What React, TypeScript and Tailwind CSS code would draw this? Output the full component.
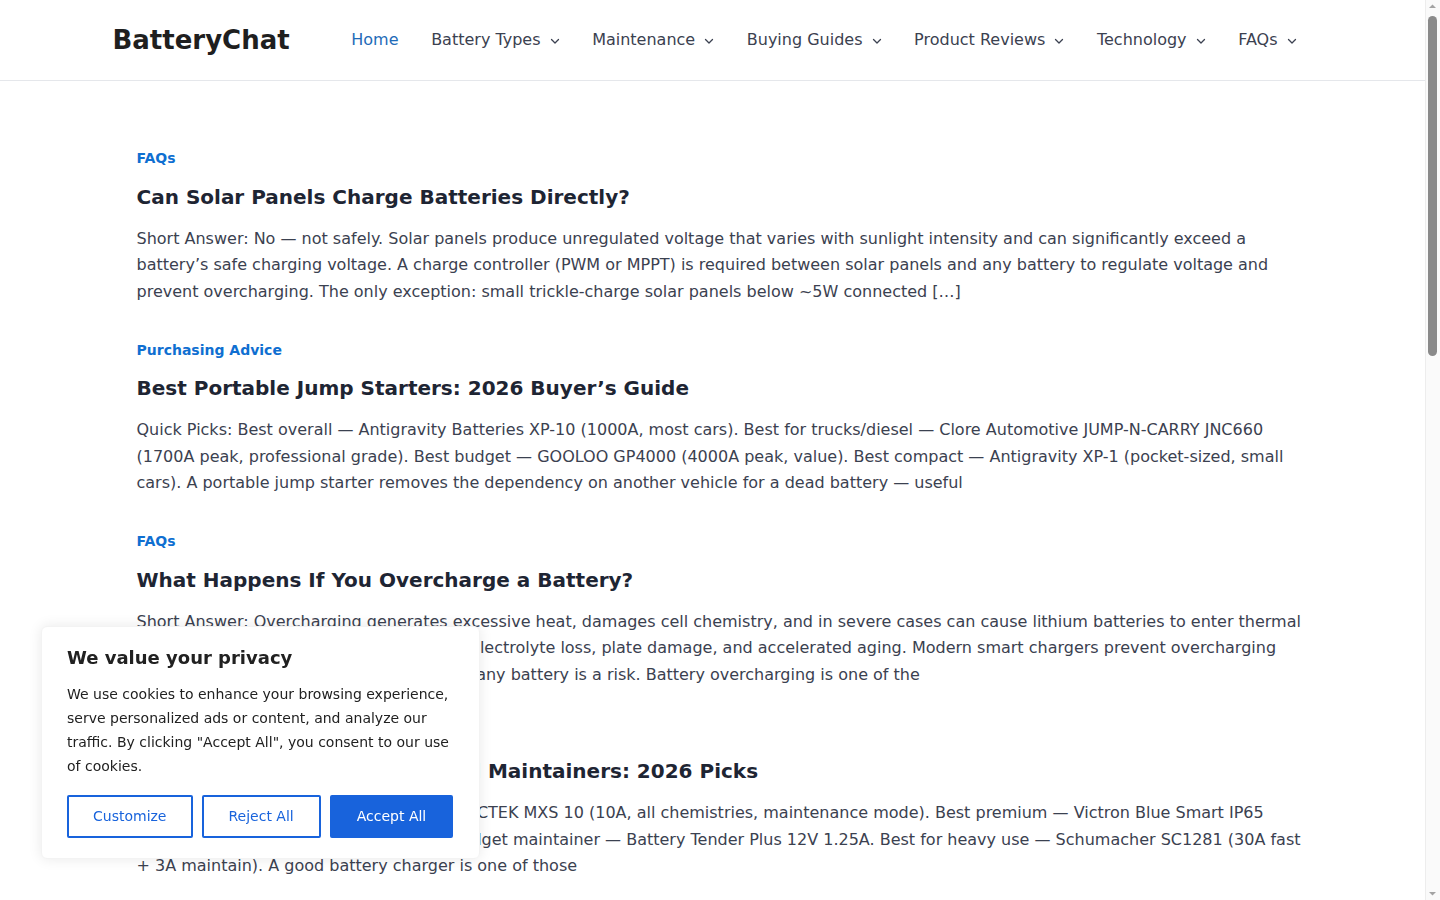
import React from "react";

type Post = { category: string; title: string; excerpt: string };

const posts: Post[] = [
  {
    category: "FAQs",
    title: "Can Solar Panels Charge Batteries Directly?",
    excerpt:
      "Short Answer: No — not safely. Solar panels produce unregulated voltage that varies with sunlight intensity and can significantly exceed a battery’s safe charging voltage. A charge controller (PWM or MPPT) is required between solar panels and any battery to regulate voltage and prevent overcharging. The only exception: small trickle-charge solar panels below ~5W connected […]",
  },
  {
    category: "Purchasing Advice",
    title: "Best Portable Jump Starters: 2026 Buyer’s Guide",
    excerpt:
      "Quick Picks: Best overall — Antigravity Batteries XP-10 (1000A, most cars). Best for trucks/diesel — Clore Automotive JUMP-N-CARRY JNC660 (1700A peak, professional grade). Best budget — GOOLOO GP4000 (4000A peak, value). Best compact — Antigravity XP-1 (pocket-sized, small cars). A portable jump starter removes the dependency on another vehicle for a dead battery — useful",
  },
  {
    category: "FAQs",
    title: "What Happens If You Overcharge a Battery?",
    excerpt:
      "Short Answer: Overcharging generates excessive heat, damages cell chemistry, and in severe cases can cause lithium batteries to enter thermal runaway. Lead-acid batteries often suffer electrolyte loss, plate damage, and accelerated aging. Modern smart chargers prevent overcharging automatically, but a dumb charger left on any battery is a risk. Battery overcharging is one of the",
  },
  {
    category: "Purchasing Advice",
    title: "Best Car Battery Chargers and Maintainers: 2026 Picks",
    excerpt:
      "Quick Picks: Best overall smart charger — CTEK MXS 10 (10A, all chemistries, maintenance mode). Best premium — Victron Blue Smart IP65 (Bluetooth app, all lithium types). Best budget maintainer — Battery Tender Plus 12V 1.25A. Best for heavy use — Schumacher SC1281 (30A fast + 3A maintain). A good battery charger is one of those",
  },
  {
    category: "Maintenance",
    title: "How to Clean Corroded Battery Terminals",
    excerpt:
      "Short Answer: Disconnect the negative cable first, then scrub the terminals with a paste of baking soda and water using a wire brush. Rinse with clean water, dry thoroughly, and apply dielectric grease or a terminal protector spray before reconnecting. Corrosion on battery terminals is one of the most common causes of starting problems, and it",
  },
  {
    category: "Battery Types",
    title: "LiFePO4 vs. Lithium-Ion: What’s the Difference?",
    excerpt:
      "Short Answer: LiFePO4 (lithium iron phosphate) is a type of lithium-ion battery with a different cathode chemistry. It offers a longer cycle life, better thermal stability, and a flatter discharge curve, but lower energy density than NMC or NCA lithium-ion cells. For solar storage, RVs and marine use, LiFePO4 is usually the better choice because",
  },
  {
    category: "Technology",
    title: "How Does a Battery Management System (BMS) Work?",
    excerpt:
      "Short Answer: A BMS monitors the voltage, current and temperature of each cell in a battery pack and disconnects the load or charger when any value leaves its safe range. It also balances cells so they charge evenly. Every lithium battery pack needs a BMS — without one, a single weak cell can be over-discharged or overcharged and",
  },
  {
    category: "Product Reviews",
    title: "Battle Born 100Ah LiFePO4 Review: Worth the Price?",
    excerpt:
      "Verdict: The Battle Born BB10012 is one of the most trusted deep-cycle lithium batteries for RVs and off-grid systems. It delivers a full 100Ah of usable capacity, an internal BMS with low-temperature protection, and a 10-year warranty. It is expensive compared with budget brands, but the build quality and support justify the cost for",
  },
  {
    category: "FAQs",
    title: "How Long Does a Car Battery Last?",
    excerpt:
      "Short Answer: Most car batteries last 3 to 5 years. Heat is the biggest factor — batteries in hot climates often fail in under three years, while those in cooler regions can last six years or more. Short trips, parasitic drains and a weak charging system also shorten battery life. Knowing the warning signs of a failing battery helps",
  },
  {
    category: "Maintenance",
    title: "How to Store Batteries Over Winter",
    excerpt:
      "Short Answer: Fully charge the battery, disconnect it from the vehicle or equipment, and store it in a cool, dry place above freezing. Connect a smart maintainer or top up the charge every one to two months. Lithium batteries should be stored at around 50% charge. Proper winter storage prevents sulfation and deep discharge, the two",
  },
];

const navItems = [
  { label: "Home", active: true, dropdown: false },
  { label: "Battery Types", active: false, dropdown: true },
  { label: "Maintenance", active: false, dropdown: true },
  { label: "Buying Guides", active: false, dropdown: true },
  { label: "Product Reviews", active: false, dropdown: true },
  { label: "Technology", active: false, dropdown: true },
  { label: "FAQs", active: false, dropdown: true },
];

function Chevron() {
  return (
    <svg width="10" height="10" viewBox="0 0 10 10" className="ml-[9px] mt-[1px]" aria-hidden="true">
      <path d="M1.5 3.5 L5 7 L8.5 3.5" fill="none" stroke="currentColor" strokeWidth="1.3" strokeLinecap="round" strokeLinejoin="round" />
    </svg>
  );
}

function Header() {
  return (
    <header className="bg-white border-b border-[#e5e7eb]">
      <div className="mx-auto w-[1200px] h-[80px] flex items-center justify-between pr-[16px]">
        <a href="#" className="text-[26px] font-bold text-[#1f1f1f] leading-none">
          BatteryChat
        </a>
        <nav className="flex items-center gap-[32.6px] text-[16px]">
          {navItems.map((item) => (
            <a
              key={item.label}
              href="#"
              className={
                item.active
                  ? "flex items-center text-[#1e6bb8]"
                  : "flex items-center text-[#3b4150]"
              }
            >
              {item.label}
              {item.dropdown && <Chevron />}
            </a>
          ))}
        </nav>
      </div>
    </header>
  );
}

function PostCard({ post }: { post: Post }) {
  return (
    <article className="pb-[34.5px]">
      <a href="#" className="block text-[14px] leading-[20px] font-bold text-[#0f6fd1]">
        {post.category}
      </a>
      <h2 className="mt-[14.5px] text-[20px] leading-[28px] font-bold text-[#1e2533]">
        <a href="#">{post.title}</a>
      </h2>
      <p className="mt-[15px] text-[16px] leading-[26.5px] text-[#3b4150]">{post.excerpt}</p>
    </article>
  );
}

function CookieBanner() {
  return (
    <div className="fixed left-[41px] bottom-[41px] w-[439px] bg-white rounded-[6px] border border-[#f3f3f3] shadow-[0_0_14px_rgba(0,0,0,0.09)] px-[25px] pt-[19px] pb-[20px] text-[#212121]">
      <p className="text-[18px] leading-[24px] font-bold">We value your privacy</p>
      <p className="mt-[12px] text-[14px] leading-[24px]">
        We use cookies to enhance your browsing experience, serve personalized ads or content, and analyze our traffic. By clicking "Accept All", you consent to our use of cookies.
      </p>
      <div className="mt-[17px] flex gap-[9px] text-[14px]">
        <button className="h-[43px] px-[24px] border-2 border-[#1863dc] rounded-[2px] text-[#1863dc] bg-white">
          Customize
        </button>
        <button className="h-[43px] px-[25px] border-2 border-[#1863dc] rounded-[2px] text-[#1863dc] bg-white">
          Reject All
        </button>
        <button className="h-[43px] px-[25px] border-2 border-[#1863dc] rounded-[2px] text-white bg-[#1863dc]">
          Accept All
        </button>
      </div>
    </div>
  );
}

// Window scrollbar rail along the right edge of the viewport
function ScrollRail() {
  return (
    <div className="fixed top-0 right-0 h-screen w-[15px] bg-[#fafafa] border-l border-[#ededed]">
      <svg width="15" height="12" viewBox="0 0 15 12" className="absolute top-0 left-[-1px]" aria-hidden="true">
        <path d="M4 8 L7.5 4.5 L11 8 Z" fill="#a3a3a3" />
      </svg>
      <div className="absolute top-[16px] left-[2px] w-[9px] h-[340px] rounded-full bg-[#8a8a8a]" />
      <svg width="15" height="12" viewBox="0 0 15 12" className="absolute bottom-0 left-[-1px]" aria-hidden="true">
        <path d="M4 4 L7.5 7.5 L11 4 Z" fill="#a3a3a3" />
      </svg>
    </div>
  );
}

export default function App() {
  return (
    <div className="min-h-screen bg-white pr-[15px]" style={{ fontFamily: '"DejaVu Sans", Verdana, sans-serif' }}>
      <Header />
      <main className="mx-auto w-[1200px] pt-[67px] pb-[40px]">
        <div className="ml-[24px] w-[1170px]">
          {posts.map((p) => (
            <PostCard key={p.title} post={p} />
          ))}
        </div>
      </main>
      <footer className="border-t border-[#e5e7eb] py-[28px] text-center text-[14px] text-[#3b4150]">
        © 2026 BatteryChat
      </footer>
      <CookieBanner />
      <ScrollRail />
    </div>
  );
}
